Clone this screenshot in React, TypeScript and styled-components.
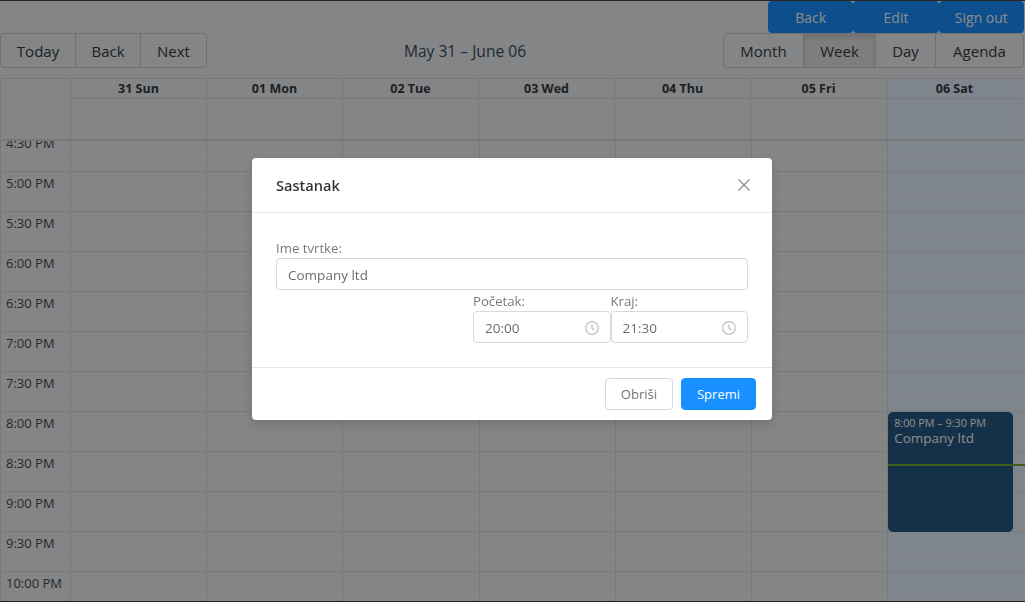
import React, { FC, ReactElement } from "react"
import styled, { createGlobalStyle } from "styled-components"

const days = ["31 Sun", "01 Mon", "02 Tue", "03 Wed", "04 Thu", "05 Fri", "06 Sat"]
const times = ["4:30 PM", "5:00 PM", "5:30 PM", "6:00 PM", "6:30 PM", "7:00 PM", "7:30 PM", "8:00 PM", "8:30 PM", "9:00 PM", "9:30 PM", "10:00 PM"]

const ClockIcon: FC = () => (
  <svg width="14" height="14" viewBox="0 0 14 14" fill="none" stroke="#bfbfbf" strokeWidth="1.2">
    <circle cx="7" cy="7" r="6.3" />
    <path d="M7 3.2V7.3L9.6 8.9" />
  </svg>
)

const CloseIcon: FC = () => (
  <svg width="12" height="12" viewBox="0 0 12 12" fill="none" stroke="#8c8c8c" strokeWidth="1.2">
    <path d="M.5.5l11 11M11.5.5l-11 11" />
  </svg>
)

export default function App(): ReactElement {
  return (
    <>
      <GlobalStyle />
      <Page>
        <TopNav>
          <NavButton>Back</NavButton>
          <NavButton>Edit</NavButton>
          <NavButton>Sign out</NavButton>
        </TopNav>
        <Toolbar>
          <ButtonGroup>
            <ToolButton $width={76}>Today</ToolButton>
            <ToolButton $width={66}>Back</ToolButton>
            <ToolButton $width={67}>Next</ToolButton>
          </ButtonGroup>
          <ToolbarLabel>May 31 – June 06</ToolbarLabel>
          <ButtonGroup>
            <ToolButton $width={81}>Month</ToolButton>
            <ToolButton $width={73} $active>Week</ToolButton>
            <ToolButton $width={61}>Day</ToolButton>
            <ToolButton $width={89}>Agenda</ToolButton>
          </ButtonGroup>
        </Toolbar>
        <Calendar>
          <TimeHeader>
            <HeaderGutter />
            {days.map((day, i) => (
              <HeaderColumn key={day} $today={i === 6}>
                <HeaderLabel>{day}</HeaderLabel>
                <AllDayCell />
              </HeaderColumn>
            ))}
          </TimeHeader>
          <TimeContent>
            <TimeInner>
              <TimeGutter>
                {times.map((time) => (
                  <GutterSlot key={time}>{time}</GutterSlot>
                ))}
              </TimeGutter>
              {days.map((day, i) => (
                <DayColumn key={day} $today={i === 6}>
                  {times.map((time) => (
                    <SlotGroup key={time} />
                  ))}
                  {i === 6 && (
                    <>
                      <CalendarEvent>
                        <EventTime>8:00 PM – 9:30 PM</EventTime>
                        <EventTitle>Company ltd</EventTitle>
                      </CalendarEvent>
                      <NowLine />
                    </>
                  )}
                </DayColumn>
              ))}
            </TimeInner>
          </TimeContent>
        </Calendar>
      </Page>
      <Overlay>
        <Modal>
          <ModalHeader>
            <ModalTitle>Sastanak</ModalTitle>
            <CloseButton>
              <CloseIcon />
            </CloseButton>
          </ModalHeader>
          <ModalBody>
            <FieldLabel>Ime tvrtke:</FieldLabel>
            <TextField>Company ltd</TextField>
            <TimeRow>
              <TimeField>
                <FieldLabel>Početak:</FieldLabel>
                <TimeInput>
                  <span>20:00</span>
                  <ClockIcon />
                </TimeInput>
              </TimeField>
              <TimeField>
                <FieldLabel>Kraj:</FieldLabel>
                <TimeInput>
                  <span>21:30</span>
                  <ClockIcon />
                </TimeInput>
              </TimeField>
            </TimeRow>
          </ModalBody>
          <ModalFooter>
            <FooterButton>Obriši</FooterButton>
            <FooterButton $primary>Spremi</FooterButton>
          </ModalFooter>
        </Modal>
      </Overlay>
    </>
  )
}

const GlobalStyle = createGlobalStyle`
  html, body {
    margin: 0;
    height: 100%;
    overflow: hidden;
    background: #f0f2f5;
    font-family: "Open Sans", "Noto Sans", Arial, sans-serif;
  }
  * {
    box-sizing: border-box;
  }
`

const Page = styled.div`
  display: flex;
  flex-direction: column;
  height: 602px;
  border: 1px solid #444;
  border-width: 1px 0;
  background: #f0f2f5;
  color: #373a3c;
  overflow: hidden;
`

const TopNav = styled.div`
  display: flex;
  justify-content: flex-end;
  height: 32px;
  padding-right: 1px;
`

const NavButton = styled.div`
  display: flex;
  align-items: center;
  justify-content: center;
  width: 85.33px;
  border-radius: 4px;
  background: #1890ff;
  color: #fff;
  font-size: 14px;
`

const Toolbar = styled.div`
  display: flex;
  align-items: center;
  justify-content: space-between;
  height: 35px;
  margin-bottom: 10px;
  padding-right: 1px;
`

const ButtonGroup = styled.div`
  display: flex;
`

const ToolButton = styled.div<{ $active?: boolean; $width: number }>`
  width: ${({ $width }) => $width}px;
  height: 35px;
  display: flex;
  align-items: center;
  justify-content: center;
  font-size: 15px;
  color: #373a3c;
  border: 1px solid #ccc;
  margin-left: -1px;
  background: ${({ $active }) => ($active ? "#e6e6e6" : "transparent")};
  box-shadow: ${({ $active }) => ($active ? "inset 0 3px 5px rgba(0, 0, 0, 0.125)" : "none")};
  &:first-child {
    margin-left: 0;
    border-radius: 4px 0 0 4px;
  }
  &:last-child {
    border-radius: 0 4px 4px 0;
  }
`

const ToolbarLabel = styled.div`
  flex: 1;
  text-align: center;
  font-size: 15.6px;
  color: #3c4e5c;
`

const Calendar = styled.div`
  display: flex;
  flex-direction: column;
  flex: 1;
  min-height: 0;
  border: 1px solid #ddd;
  border-width: 1px 0 0 1px;
`

const TimeHeader = styled.div`
  display: flex;
  height: 62px;
  flex-shrink: 0;
  border-bottom: 2px solid #ddd;
`

const HeaderGutter = styled.div`
  width: 69px;
  flex-shrink: 0;
`

const HeaderColumn = styled.div<{ $today?: boolean }>`
  width: 136px;
  flex-shrink: 0;
  display: flex;
  flex-direction: column;
  border-left: 1px solid #ddd;
  background: ${({ $today }) => ($today ? "#e6f3ff" : "transparent")};
`

const HeaderLabel = styled.div`
  height: 20px;
  line-height: 19px;
  text-align: center;
  font-size: 12.5px;
  font-weight: 700;
  border-bottom: 1px solid #ddd;
`

const AllDayCell = styled.div`
  flex: 1;
`

const TimeContent = styled.div`
  flex: 1;
  min-height: 0;
  overflow: hidden;
`

const TimeInner = styled.div`
  display: flex;
  margin-top: -9px;
`

const TimeGutter = styled.div`
  width: 69px;
  flex-shrink: 0;
`

const GutterSlot = styled.div`
  height: 40px;
  padding-left: 5px;
  font-size: 13px;
  line-height: 22px;
  color: #4a4d50;
  border-bottom: 1px solid #ddd;
  white-space: nowrap;
`

const DayColumn = styled.div<{ $today?: boolean }>`
  position: relative;
  width: 136.2px;
  flex-shrink: 0;
  border-left: 1px solid #ddd;
  background: ${({ $today }) => ($today ? "#e6f3ff" : "transparent")};
  &:last-child {
    flex: 1;
  }
`

const SlotGroup = styled.div`
  height: 40px;
  border-bottom: 1px solid #ddd;
  background: linear-gradient(#f7f7f7, #f7f7f7) 0 20px / 100% 1px no-repeat;
`

const CalendarEvent = styled.div`
  position: absolute;
  left: 0;
  top: 280px;
  width: 125px;
  height: 120px;
  padding: 4px 6px;
  border-radius: 5px;
  background: #265985;
  color: #fff;
`

const EventTime = styled.div`
  font-size: 10.8px;
  line-height: 14px;
`

const EventTitle = styled.div`
  font-size: 13.5px;
  line-height: 17px;
`

const NowLine = styled.div`
  position: absolute;
  left: 0;
  right: 0;
  top: 332px;
  height: 2px;
  background: #74ad31;
`

const Overlay = styled.div`
  position: fixed;
  inset: 0;
  display: flex;
  justify-content: center;
  align-items: flex-start;
  padding: 158px 1px 0 0;
  background: rgba(0, 0, 0, 0.45);
`

const Modal = styled.div`
  width: 520px;
  height: 262px;
  display: flex;
  flex-direction: column;
  border-radius: 4px;
  background: #fff;
  box-shadow: 0 4px 12px rgba(0, 0, 0, 0.15);
  color: rgba(0, 0, 0, 0.6);
`

const ModalHeader = styled.div`
  display: flex;
  align-items: center;
  justify-content: space-between;
  height: 55px;
  padding: 0 22px 0 24px;
  border-bottom: 1px solid #e8e8e8;
`

const ModalTitle = styled.div`
  font-size: 14.6px;
  font-weight: 600;
  color: rgba(0, 0, 0, 0.8);
`

const CloseButton = styled.div`
  display: flex;
`

const ModalBody = styled.div`
  flex: 1;
  padding: 26px 24px 0;
`

const FieldLabel = styled.div`
  font-size: 13.2px;
  line-height: 19px;
  color: rgba(0, 0, 0, 0.55);
`

const TextField = styled.div`
  height: 32px;
  padding: 1px 11px 0;
  display: flex;
  align-items: center;
  font-size: 13.5px;
  border: 1px solid #d9d9d9;
  border-radius: 4px;
`

const TimeRow = styled.div`
  display: flex;
  width: 275px;
  margin: 2px 0 0 auto;
`

const TimeField = styled.div`
  flex: 1;
`

const TimeInput = styled.div`
  height: 32px;
  padding: 1px 11px 0;
  display: flex;
  align-items: center;
  justify-content: space-between;
  font-size: 13.5px;
  border: 1px solid #d9d9d9;
  border-radius: 4px;
`

const ModalFooter = styled.div`
  display: flex;
  justify-content: flex-end;
  gap: 8px;
  height: 53px;
  padding: 10px 16px;
  border-top: 1px solid #e8e8e8;
`

const FooterButton = styled.div<{ $primary?: boolean }>`
  height: 32px;
  padding: 0 15px;
  display: flex;
  align-items: center;
  font-size: 13px;
  border-radius: 4px;
  border: 1px solid ${({ $primary }) => ($primary ? "#1890ff" : "#d9d9d9")};
  background: ${({ $primary }) => ($primary ? "#1890ff" : "#fff")};
  color: ${({ $primary }) => ($primary ? "#fff" : "rgba(0, 0, 0, 0.6)")};
`
